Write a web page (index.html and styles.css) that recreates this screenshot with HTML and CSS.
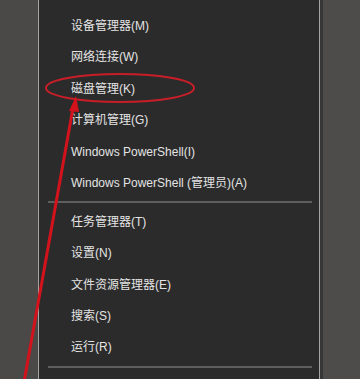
FILE: index.html
```html
<!DOCTYPE html>
<html lang="zh">
<head>
<meta charset="utf-8">
<link rel="stylesheet" href="styles.css">
</head>
<body>
<div class="screen">
  <div class="side side-left"></div>
  <div class="edge"></div>
  <div class="menu">
    <div class="item">设备管理器(M)</div>
    <div class="item">网络连接(W)</div>
    <div class="item">磁盘管理(K)</div>
    <div class="item">计算机管理(G)</div>
    <div class="item">Windows PowerShell(I)</div>
    <div class="item">Windows PowerShell (管理员)(A)</div>
    <div class="sep"></div>
    <div class="item">任务管理器(T)</div>
    <div class="item">设置(N)</div>
    <div class="item">文件资源管理器(E)</div>
    <div class="item">搜索(S)</div>
    <div class="item">运行(R)</div>
    <div class="sep sep2"></div>
    <div class="item">关机或注销(U)</div>
  </div>
  <div class="edge"></div>
  <div class="shadow"></div>
  <div class="side side-right"></div>
  <svg class="annot" width="360" height="379" viewBox="0 0 360 379">
    <ellipse cx="120" cy="88" rx="74" ry="14" fill="none" stroke="#c81e28" stroke-width="2"/>
    <line x1="24" y1="382" x2="73" y2="108" stroke="#d3121c" stroke-width="3"/>
    <polygon points="76,96 69,111 79,112" fill="#d3121c"/>
  </svg>
</div>
</body>
</html>
```
FILE: styles.css
```css
html, body {
  margin: 0;
  padding: 0;
  background: #2b2b2b;
  overflow: hidden;
}
.screen {
  position: relative;
  display: flex;
  width: 360px;
  height: 379px;
  overflow: hidden;
}
.side {
  height: 100%;
}
.side-left {
  width: 38px;
  background: #4a4948;
}
.side-right {
  flex: 1;
  background: #4e4c4a;
}
.edge {
  width: 1px;
  background: #a4a4a4;
}
.shadow {
  width: 3px;
  background: #363636;
}
.menu {
  width: 280px;
  background: #2b2b2b;
  padding-top: 11px;
  box-sizing: border-box;
  font-family: "Segoe UI", "Liberation Sans", "Noto Sans CJK SC", sans-serif;
  font-size: 12px;
  color: #e4e4e4;
}
.item {
  height: 31.4px;
  line-height: 31.4px;
  padding-left: 32px;
  white-space: nowrap;
}
.sep {
  height: 2px;
  margin: 1.8px 7px 3.6px 9px;
  background: #5e5e5e;
}
.sep2 {
  margin-top: 2.6px;
}
.annot {
  position: absolute;
  left: 0;
  top: 0;
}
```
